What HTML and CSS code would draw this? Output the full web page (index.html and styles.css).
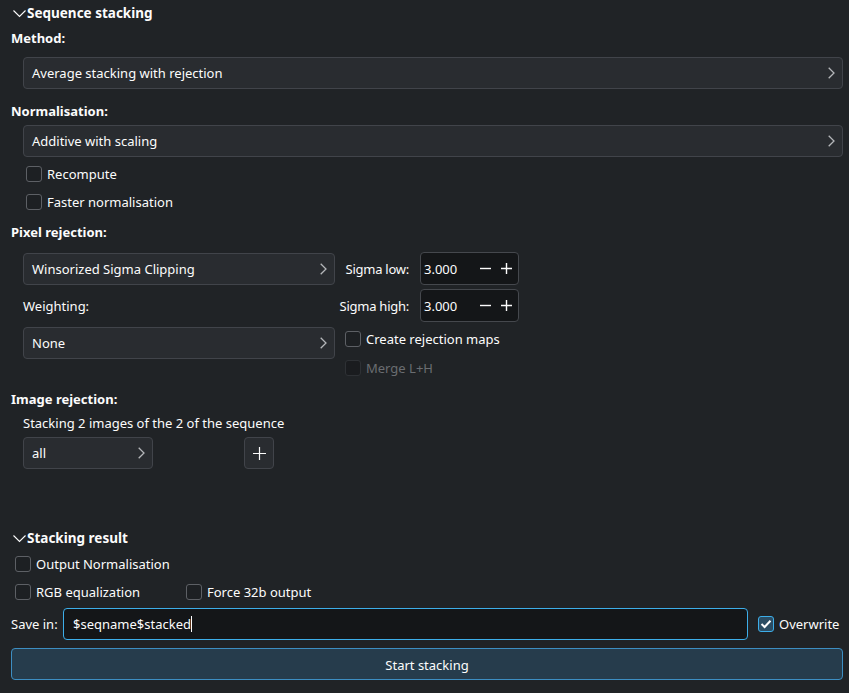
FILE: index.html
```html
<!DOCTYPE html>
<html lang="en">
<head>
  <meta charset="UTF-8" />
  <title>Stacking</title>
  <link rel="stylesheet" href="styles.css">
</head>
<body>

  <div class="panel">

    <div class="group-head">
      <svg class="fold" width="13" height="8" viewBox="0 0 13 8"><path d="M0.5 0.5 L6.5 6.5 L12.5 0.5" fill="none" stroke="#fcfcfc" stroke-width="1.1"/></svg>
      <span>Sequence stacking</span>
    </div>

    <div class="label bold method-label">Method:</div>
    <div class="combo wide first-combo">
      <span>Average stacking with rejection</span>
      <svg class="arrow" width="7" height="12" viewBox="0 0 7 12"><path d="M0.7 0.7 L6 6 L0.7 11.3" fill="none" stroke="#b4b6b9" stroke-width="1.3"/></svg>
    </div>

    <div class="label bold norm-label">Normalisation:</div>
    <div class="combo wide">
      <span>Additive with scaling</span>
      <svg class="arrow" width="7" height="12" viewBox="0 0 7 12"><path d="M0.7 0.7 L6 6 L0.7 11.3" fill="none" stroke="#b4b6b9" stroke-width="1.3"/></svg>
    </div>

    <label class="check indent recompute"><span class="box"></span>Recompute</label>
    <label class="check indent faster"><span class="box"></span>Faster normalisation</label>

    <div class="label bold pixel-label">Pixel rejection:</div>

    <div class="rejection-grid">
      <div class="combo">
        <span>Winsorized Sigma Clipping</span>
        <svg class="arrow" width="7" height="12" viewBox="0 0 7 12"><path d="M0.7 0.7 L6 6 L0.7 11.3" fill="none" stroke="#b4b6b9" stroke-width="1.3"/></svg>
      </div>
      <div class="spin-label">Sigma low:</div>
      <div class="spin">
        <span>3.000</span>
        <span class="spin-btns">
          <svg width="11" height="11" viewBox="0 0 11 11"><path d="M0 5.5 H11" stroke="#fcfcfc" stroke-width="1.4"/></svg>
          <svg width="11" height="11" viewBox="0 0 11 11"><path d="M0 5.5 H11 M5.5 0 V11" stroke="#fcfcfc" stroke-width="1.4"/></svg>
        </span>
      </div>

      <div class="label weighting">Weighting:</div>
      <div class="spin-label">Sigma high:</div>
      <div class="spin">
        <span>3.000</span>
        <span class="spin-btns">
          <svg width="11" height="11" viewBox="0 0 11 11"><path d="M0 5.5 H11" stroke="#fcfcfc" stroke-width="1.4"/></svg>
          <svg width="11" height="11" viewBox="0 0 11 11"><path d="M0 5.5 H11 M5.5 0 V11" stroke="#fcfcfc" stroke-width="1.4"/></svg>
        </span>
      </div>

      <div class="combo">
        <span>None</span>
        <svg class="arrow" width="7" height="12" viewBox="0 0 7 12"><path d="M0.7 0.7 L6 6 L0.7 11.3" fill="none" stroke="#b4b6b9" stroke-width="1.3"/></svg>
      </div>
      <div class="map-checks">
        <label class="check"><span class="box"></span>Create rejection maps</label>
        <label class="check disabled"><span class="box"></span>Merge L+H</label>
      </div>
    </div>

    <div class="label bold image-label">Image rejection:</div>
    <div class="label indent-text stacking-count">Stacking 2 images of the 2 of the sequence</div>
    <div class="image-row">
      <div class="combo small">
        <span>all</span>
        <svg class="arrow" width="7" height="12" viewBox="0 0 7 12"><path d="M0.7 0.7 L6 6 L0.7 11.3" fill="none" stroke="#b4b6b9" stroke-width="1.3"/></svg>
      </div>
      <div class="tool-btn">
        <svg width="13" height="13" viewBox="0 0 13 13"><path d="M0 6.5 H13 M6.5 0 V13" stroke="#fcfcfc" stroke-width="1.2"/></svg>
      </div>
    </div>

    <div class="group-head result-head">
      <svg class="fold" width="13" height="8" viewBox="0 0 13 8"><path d="M0.5 0.5 L6.5 6.5 L12.5 0.5" fill="none" stroke="#fcfcfc" stroke-width="1.1"/></svg>
      <span>Stacking result</span>
    </div>

    <label class="check out-norm"><span class="box"></span>Output Normalisation</label>
    <div class="pair-row">
      <label class="check rgb"><span class="box"></span>RGB equalization</label>
      <label class="check"><span class="box"></span>Force 32b output</label>
    </div>

    <div class="save-row">
      <span class="save-label">Save in:</span>
      <div class="line-edit"><span>$seqname$stacked</span><span class="caret"></span></div>
      <label class="check checked"><span class="box">
        <svg width="12" height="10" viewBox="0 0 12 10"><path d="M1.5 5 L4.6 8 L10.5 1.8" fill="none" stroke="#fcfcfc" stroke-width="2"/></svg>
      </span>Overwrite</label>
    </div>

    <div class="start-btn">Start stacking</div>

  </div>

</body>
</html>
```

FILE: styles.css
```css
body {
  margin: 0;
  background: #202326;
  color: #fcfcfc;
  font-family: 'Noto Sans', sans-serif;
  font-size: 13px;
  width: 849px;
  height: 693px;
  overflow: hidden;
}

.panel {
  padding: 3px 6px 0 11px;
  display: flex;
  flex-direction: column;
}

.bold {
  font-weight: bold;
}

.group-head {
  display: flex;
  align-items: center;
  height: 20px;
  font-weight: bold;
  font-size: 13.5px;
  margin-left: 2px;
}

.group-head .fold {
  margin-right: 1px;
  margin-top: 1px;
}

.label {
  height: 20px;
  line-height: 20px;
  white-space: nowrap;
}

.method-label {
  margin-top: 5px;
}

.combo {
  box-sizing: border-box;
  height: 32px;
  background: #292c30;
  border: 1px solid #41444a;
  border-radius: 4px;
  display: flex;
  align-items: center;
  justify-content: space-between;
  padding: 0 7px 0 8px;
}

.combo .arrow {
  flex-shrink: 0;
}

.wide {
  margin-left: 12px;
}

.first-combo {
  margin-top: 9px;
}

.norm-label {
  margin-top: 12px;
}

.norm-label + .combo {
  margin-top: 4px;
}

.check {
  display: flex;
  align-items: center;
  height: 20px;
  margin-left: 4px;
  white-space: nowrap;
}

.check .box {
  box-sizing: border-box;
  width: 16px;
  height: 16px;
  border: 1px solid #5d6065;
  border-radius: 3px;
  background: #1d2023;
  margin-right: 5px;
  display: flex;
  align-items: center;
  justify-content: center;
  flex-shrink: 0;
}

.check.disabled {
  color: #6a6d71;
}

.check.disabled .box {
  border-color: #2e3135;
  background: #1a1c1f;
}

.check.checked .box {
  border-color: #3daee9;
  background: #2b4c62;
}

.indent {
  margin-left: 15px;
}

.recompute {
  margin-top: 7px;
}

.faster {
  margin-top: 8px;
}

.pixel-label {
  margin-top: 10px;
}

.rejection-grid {
  display: grid;
  grid-template-columns: 312px 79px 99px;
  grid-template-rows: 32px 32px 32px;
  column-gap: 3px;
  row-gap: 5px;
  margin-left: 12px;
  margin-top: 11px;
}

.spin-label {
  display: flex;
  align-items: center;
  justify-content: flex-end;
  padding-right: 8px;
  white-space: nowrap;
  letter-spacing: -0.25px;
}

.spin {
  box-sizing: border-box;
  height: 33px;
  margin-top: -1px;
  background: #141618;
  border: 1px solid #45484d;
  border-radius: 4px;
  display: flex;
  align-items: center;
  justify-content: space-between;
  padding: 0 6px 0 3px;
}

.spin-btns {
  display: flex;
  gap: 10px;
}

.spin-btns svg {
  display: block;
}

.weighting {
  line-height: 32px;
  height: 32px;
}

.map-checks {
  grid-column: 2 / 4;
  display: flex;
  flex-direction: column;
  gap: 9px;
  padding-top: 2px;
  padding-left: 3px;
  height: 49px;
}

.image-label {
  margin-top: 30px;
}

.indent-text {
  margin-left: 12px;
}

.stacking-count {
  margin-top: 4px;
}

.image-row {
  display: flex;
  margin-left: 12px;
  margin-top: 4px;
  gap: 91px;
}

.combo.small {
  width: 130px;
}

.tool-btn {
  box-sizing: border-box;
  width: 30px;
  height: 32px;
  background: #292c30;
  border: 1px solid #41444a;
  border-radius: 4px;
  display: flex;
  align-items: center;
  justify-content: center;
}

.result-head {
  margin-top: 59px;
}

.out-norm {
  margin-top: 6px;
}

.pair-row {
  display: flex;
  margin-top: 8px;
}

.pair-row .rgb {
  width: 167px;
}

.save-row {
  display: flex;
  align-items: center;
  margin-top: 6px;
  height: 32px;
}

.save-label {
  width: 52px;
}

.line-edit {
  box-sizing: border-box;
  width: 685px;
  height: 32px;
  background: #141618;
  border: 1px solid #3daee9;
  border-radius: 4px;
  display: flex;
  align-items: center;
  padding-left: 9px;
  margin-right: 6px;
}

.caret {
  width: 1px;
  height: 16px;
  background: #fcfcfc;
}

.start-btn {
  box-sizing: border-box;
  height: 32px;
  margin-top: 8px;
  padding-top: 1px;
  background: #263c4c;
  border: 1px solid #3d8ec2;
  border-radius: 4px;
  display: flex;
  align-items: center;
  justify-content: center;
}
```
